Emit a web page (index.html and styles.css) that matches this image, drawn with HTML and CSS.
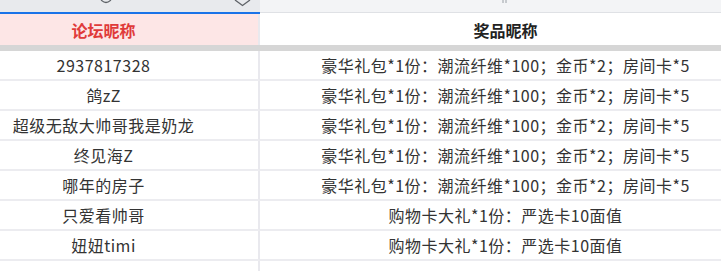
FILE: index.html
```html
<!DOCTYPE html>
<html lang="zh">
<head>
<meta charset="utf-8">
<link rel="stylesheet" href="styles.css">
</head>
<body>
<div class="sheet">
  <div class="line top">
    <div class="cell a tool">
      <svg class="ico" width="259" height="12" viewBox="0 0 259 12"><circle cx="105" cy="-3" r="5.5" fill="none" stroke="#5f6368" stroke-width="1.3"/><polyline points="234,0 241.5,5.5 249,0" fill="none" stroke="#5f6368" stroke-width="1.3"/></svg>
    </div>
    <div class="cell b tool">
      <svg class="ico" width="461" height="12" viewBox="0 0 461 12"><line x1="243" y1="0" x2="243" y2="3" stroke="#9aa0a6" stroke-width="1"/><line x1="246" y1="0" x2="246" y2="3" stroke="#9aa0a6" stroke-width="1"/></svg>
    </div>
  </div>
  <div class="line head">
    <div class="cell a">论坛昵称</div>
    <div class="cell b">奖品昵称</div>
  </div>
  <div class="band"></div>
  <div class="line row"><div class="cell a">2937817328</div><div class="cell b">豪华礼包*1份：潮流纤维*100；金币*2；房间卡*5</div></div>
  <div class="line row"><div class="cell a">鸽zZ</div><div class="cell b">豪华礼包*1份：潮流纤维*100；金币*2；房间卡*5</div></div>
  <div class="line row"><div class="cell a">超级无敌大帅哥我是奶龙</div><div class="cell b">豪华礼包*1份：潮流纤维*100；金币*2；房间卡*5</div></div>
  <div class="line row"><div class="cell a">终见海Z</div><div class="cell b">豪华礼包*1份：潮流纤维*100；金币*2；房间卡*5</div></div>
  <div class="line row"><div class="cell a">哪年的房子</div><div class="cell b">豪华礼包*1份：潮流纤维*100；金币*2；房间卡*5</div></div>
  <div class="line row"><div class="cell a">只爱看帅哥</div><div class="cell b">购物卡大礼*1份：严选卡10面值</div></div>
  <div class="line row"><div class="cell a">妞妞timi</div><div class="cell b">购物卡大礼*1份：严选卡10面值</div></div>
  <div class="line row"><div class="cell a"></div><div class="cell b"></div></div>
</div>
</body>
</html>
```
FILE: styles.css
```css
html, body {
  margin: 0;
  padding: 0;
  background: #ffffff;
  overflow: hidden;
}
.sheet {
  width: 721px;
  height: 271px;
  overflow: hidden;
  font-family: "Noto Sans CJK SC", "Microsoft YaHei", sans-serif;
  font-size: 16px;
  color: #333333;
}
.line {
  display: grid;
  grid-template-columns: 260px 461px;
}
.cell {
  display: flex;
  align-items: center;
  justify-content: center;
  white-space: nowrap;
  overflow: hidden;
}
.cell.a {
  border-right: 2px solid #e9e9ee;
  padding-right: 51px;
}
.cell.b {
  padding-left: 30px;
}
.top .cell {
  height: 12px;
  padding: 0;
  border-right: none;
}
.top .cell.a {
  background: #e8eaed;
  border-bottom: 2px solid #1a73e8;
}
.top .cell.b {
  background: #f3f4f6;
  border-bottom: 1px solid #dfe1e5;
}
.ico {
  display: block;
}
.head .cell {
  height: 31px;
  font-weight: 700;
}
.head .cell.a {
  background: #fde6e6;
  color: #e03a3a;
}
.head .cell.b {
  color: #222222;
}
.band {
  height: 6px;
  background: #d6d6d6;
}
.row .cell {
  height: 28px;
  border-bottom: 2px solid #ececf0;
  letter-spacing: 0.5px;
}
```
